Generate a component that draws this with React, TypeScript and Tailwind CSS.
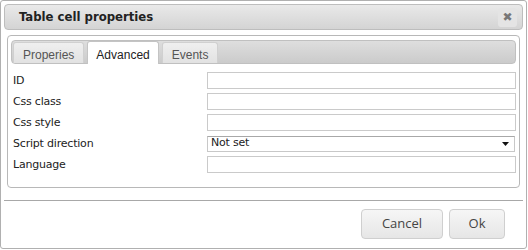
import React from "react";

const rows = [
  { label: "ID" },
  { label: "Css class" },
  { label: "Css style" },
  { label: "Script direction", select: "Not set" },
  { label: "Language" },
];

const Tab = ({ label, active }: { label: string; active?: boolean }) => (
  <div
    className={
      active
        ? "h-[23px] -mb-px px-[8px] pt-[4px] border border-b-0 border-[#c4c4c4] rounded-t-[3px] bg-white text-[#222]"
        : "h-[21px] px-[9px] pt-[3px] border border-b-0 border-[#d0d0d0] rounded-t-[3px] bg-gradient-to-b from-[#efefef] to-[#e2e2e2] text-[#555]"
    }
  >
    {label}
  </div>
);

export default function App() {
  return (
    <div className="w-[528px] h-[250px] bg-white">
      <div className="w-[527px] h-[249px] border border-[#b0b0b0] rounded-[3px] bg-white flex flex-col">
        <div className="mx-[3px] mt-[3px] h-[26px] flex items-center justify-between pl-[14px] pr-[5px] border border-[#bdbdbd] rounded-[4px] bg-gradient-to-b from-[#e9e9e9] to-[#d4d4d4]">
          <span className="font-['DejaVu_Sans_Condensed',sans-serif] font-bold text-[13px] text-[#222]">
            Table cell properties
          </span>
          <div className="w-[19px] h-[19px] rounded-[3px] bg-[#e4e4e4] flex items-center justify-center text-[#777] text-[12px] leading-none font-['DejaVu_Sans',sans-serif]">
            ✖
          </div>
        </div>

        <div className="mx-[6px] mt-[5px] h-[153px] border border-[#b8b8b8] rounded-[4px] px-[3px] pt-[4px]">
          <div className="h-[24px] flex items-end gap-[3px] pl-[1px] border border-[#c0c0c0] rounded-[4px] bg-gradient-to-b from-[#dedede] to-[#cbcbcb] font-['Liberation_Sans',sans-serif] text-[12px]">
            <Tab label="Properies" />
            <Tab label="Advanced" active />
            <Tab label="Events" />
          </div>
          <div className="mt-[8px] flex flex-col gap-[4px] font-['DejaVu_Sans',sans-serif] text-[11px] text-[#222]">
            {rows.map((r) => (
              <div key={r.label} className="flex items-center h-[17px] pl-[2px]">
                <span className="w-[194px] pt-[1px] tracking-[-0.2px]">{r.label}</span>
                {r.select ? (
                  <div className="w-[308px] h-[16px] border border-[#c8c8c8] border-t-[#a8a8a8] flex items-center justify-between pl-[3px] pr-[5px] tracking-[-0.2px]">
                    <span>{r.select}</span>
                    <svg width="7" height="4" viewBox="0 0 7 4">
                      <path d="M0 0h7L3.5 4z" fill="#111" />
                    </svg>
                  </div>
                ) : (
                  <div className="w-[310px] h-[17px] border border-[#cacaca]" />
                )}
              </div>
            ))}
          </div>
        </div>

        <div className="mt-[12px] mx-[3px] border-t border-[#a8a8a8]" />

        <div className="flex justify-end gap-[6px] pr-[21px] pt-[8px] font-['Open_Sans',sans-serif] text-[13px] text-[#444]">
          <button className="w-[82px] h-[30px] border border-[#cfcfcf] rounded-[4px] bg-gradient-to-b from-[#f6f6f6] to-[#e6e6e6]">
            Cancel
          </button>
          <button className="w-[56px] h-[30px] border border-[#cfcfcf] rounded-[4px] bg-gradient-to-b from-[#f6f6f6] to-[#e6e6e6]">
            Ok
          </button>
        </div>
      </div>
    </div>
  );
}
